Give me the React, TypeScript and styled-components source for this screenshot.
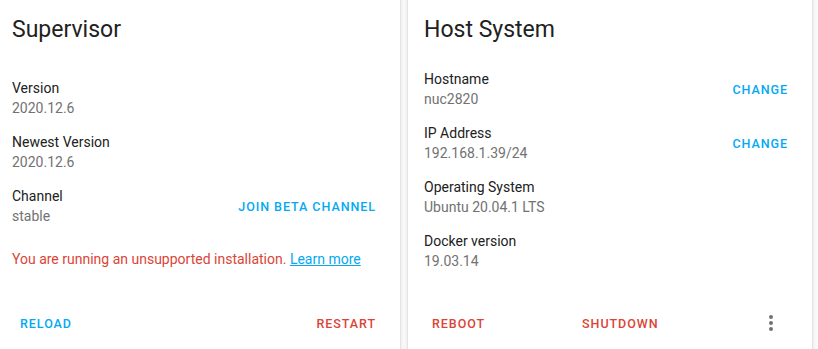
import React from "react";
import styled, { createGlobalStyle } from "styled-components";

const GlobalStyle = createGlobalStyle`
  html, body {
    margin: 0;
    padding: 0;
    background: #fafafa;
    font-family: Roboto, "Noto Sans", sans-serif;
    -webkit-font-smoothing: antialiased;
  }
`;

const Page = styled.div`
  display: flex;
  gap: 8px;
  margin: -10px 0 0 -4px;
`;

const Card = styled.div`
  width: 404px;
  height: 365px;
  background: #ffffff;
  border-radius: 4px;
  box-shadow: 0 2px 2px 0 rgba(0, 0, 0, 0.14), 0 1px 5px 0 rgba(0, 0, 0, 0.12),
    0 3px 1px -2px rgba(0, 0, 0, 0.2);
  display: flex;
  flex-direction: column;
  box-sizing: border-box;
`;

const Header = styled.h1`
  margin: 0;
  padding: 24px 16px 16px;
  font-size: 23px;
  line-height: 32px;
  font-weight: 400;
  color: #212121;
`;

const Content = styled.div<{ $top: number }>`
  padding: ${(p) => p.$top}px 16px 0;
  display: flex;
  flex-direction: column;
`;

const Row = styled.div`
  display: flex;
  align-items: center;
  justify-content: space-between;
  padding: 7px 0;
`;

const Info = styled.div`
  display: flex;
  flex-direction: column;
  font-size: 14px;
  line-height: 20px;
`;

const Label = styled.span`
  color: #212121;
`;

const Value = styled.span`
  color: #727272;
`;

const TextButton = styled.button<{ $tone: "primary" | "error" }>`
  border: none;
  background: transparent;
  padding: 0 8px;
  height: 36px;
  font-family: Roboto, "Noto Sans", sans-serif;
  font-size: 12.5px;
  font-weight: 500;
  letter-spacing: 0.95px;
  text-transform: uppercase;
  color: ${(p) => (p.$tone === "primary" ? "#03a9f4" : "#db4437")};
  cursor: pointer;
`;

const Warning = styled.div`
  margin-top: 16px;
  font-size: 14px;
  line-height: 20px;
  color: #db4437;
`;

const Link = styled.a`
  color: #03a9f4;
  text-decoration: underline;
`;

const Actions = styled.div`
  margin-top: auto;
  padding: 8px 8px 14px;
  display: flex;
  align-items: center;
  justify-content: space-between;
`;

const ActionButton = styled(TextButton)`
  padding: 0 16px;
`;

const SpacedButton = styled(ActionButton)`
  margin-left: 65px;
`;

const MenuButton = styled.button`
  margin-left: auto;
  margin-right: 9px;
  width: 48px;
  height: 36px;
  border: none;
  background: transparent;
  display: flex;
  align-items: center;
  justify-content: center;
  padding: 0;
  color: #727272;
`;

const DotsIcon = () => (
  <svg width="24" height="24" viewBox="0 0 24 24" fill="currentColor">
    <path d="M12,16A2,2 0 0,1 14,18A2,2 0 0,1 12,20A2,2 0 0,1 10,18A2,2 0 0,1 12,16M12,10A2,2 0 0,1 14,12A2,2 0 0,1 12,14A2,2 0 0,1 10,12A2,2 0 0,1 12,10M12,4A2,2 0 0,1 14,6A2,2 0 0,1 12,8A2,2 0 0,1 10,6A2,2 0 0,1 12,4Z" />
  </svg>
);

const InfoRow = ({
  label,
  value,
  action,
}: {
  label: string;
  value: string;
  action?: string;
}) => (
  <Row>
    <Info>
      <Label>{label}</Label>
      <Value>{value}</Value>
    </Info>
    {action && <TextButton $tone="primary">{action}</TextButton>}
  </Row>
);

export default function App() {
  return (
    <>
      <GlobalStyle />
      <Page>
        <Card>
          <Header>Supervisor</Header>
          <Content $top={9}>
            <InfoRow label="Version" value="2020.12.6" />
            <InfoRow label="Newest Version" value="2020.12.6" />
            <InfoRow label="Channel" value="stable" action="Join beta channel" />
            <Warning>
              You are running an unsupported installation.{" "}
              <Link href="#">Learn more</Link>
            </Warning>
          </Content>
          <Actions>
            <ActionButton $tone="primary">Reload</ActionButton>
            <ActionButton $tone="error">Restart</ActionButton>
          </Actions>
        </Card>
        <Card>
          <Header>Host System</Header>
          <Content $top={0}>
            <InfoRow label="Hostname" value="nuc2820" action="Change" />
            <InfoRow label="IP Address" value="192.168.1.39/24" action="Change" />
            <InfoRow label="Operating System" value="Ubuntu 20.04.1 LTS" />
            <InfoRow label="Docker version" value="19.03.14" />
          </Content>
          <Actions>
            <ActionButton $tone="error">Reboot</ActionButton>
            <SpacedButton $tone="error">Shutdown</SpacedButton>
            <MenuButton aria-label="More">
              <DotsIcon />
            </MenuButton>
          </Actions>
        </Card>
      </Page>
    </>
  );
}
